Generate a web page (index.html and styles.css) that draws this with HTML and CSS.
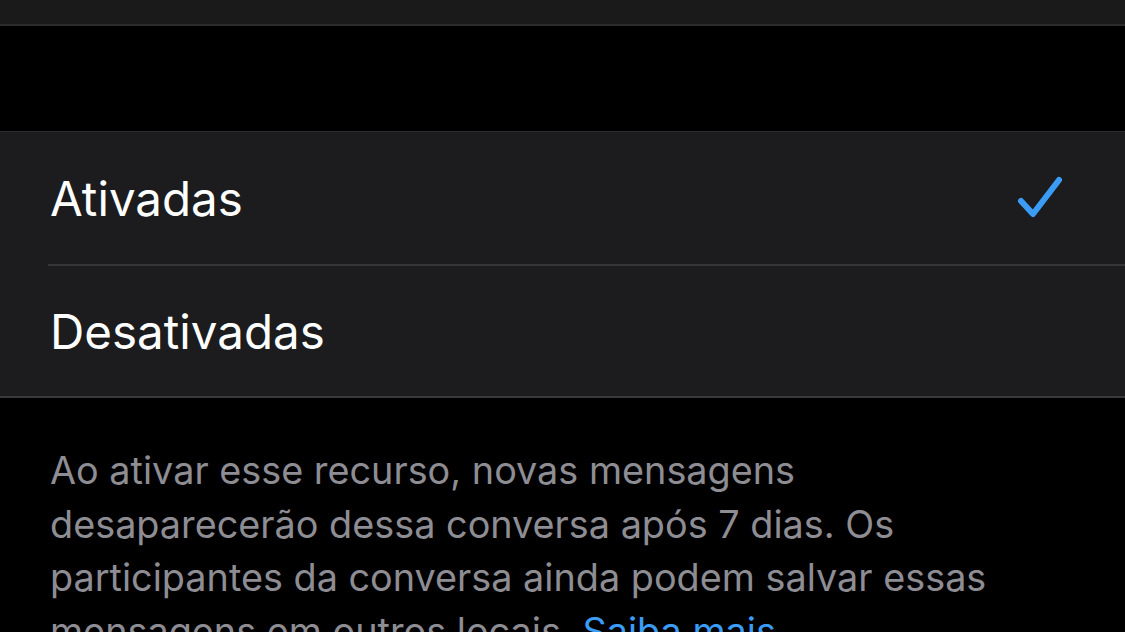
FILE: index.html
```html
<!DOCTYPE html>
<html lang="pt-BR">
<head>
<meta charset="utf-8">
<link rel="stylesheet" href="styles.css">
</head>
<body>
<div class="topbar"></div>
<div class="spacer"></div>
<ul class="group">
  <li class="row">
    <span class="label">Ativadas</span>
    <svg class="check" viewBox="0 0 46 44" width="46" height="44" aria-hidden="true">
      <path d="M4 25 L16 38 L42 4" fill="none" stroke="#3a9cf4" stroke-width="6" stroke-linecap="round" stroke-linejoin="round"/>
    </svg>
  </li>
  <li class="row">
    <span class="label">Desativadas</span>
  </li>
</ul>
<p class="footer">Ao ativar esse recurso, novas mensagens desaparecerão dessa conversa após 7 dias. Os participantes da conversa ainda podem salvar essas mensagens em outros locais. <a class="link" href="#">Saiba mais</a></p>
</body>
</html>
```
FILE: styles.css
```css
* { box-sizing: border-box; }
html, body {
  margin: 0;
  padding: 0;
  background: #000;
  font-family: Inter, "Noto Sans", sans-serif;
  overflow: hidden;
  height: 632px;
}
.topbar {
  height: 26px;
  background: #1a1a1a;
  border-bottom: 2px solid #2c2c2e;
}
.spacer {
  height: 105px;
}
.group {
  list-style: none;
  margin: 0;
  padding: 0;
  background: #1c1c1e;
  border-top: 1px solid #2c2c2e;
  border-bottom: 2px solid #3a3a3c;
}
.row {
  height: 132px;
  display: flex;
  align-items: center;
  justify-content: space-between;
  margin-left: 48px;
  padding-left: 2px;
  padding-right: 62px;
}
.row + .row {
  border-top: 2px solid #363638;
}
.label {
  color: #fff;
  font-size: 47.5px;
}
.check {
  display: block;
}
.footer {
  margin: 0;
  padding: 46px 60px 0 50px;
  max-width: 1070px;
  color: #8d8d93;
  font-size: 37.8px;
  line-height: 53.5px;
}
.link {
  color: #3a9cf4;
  text-decoration: none;
}
```
